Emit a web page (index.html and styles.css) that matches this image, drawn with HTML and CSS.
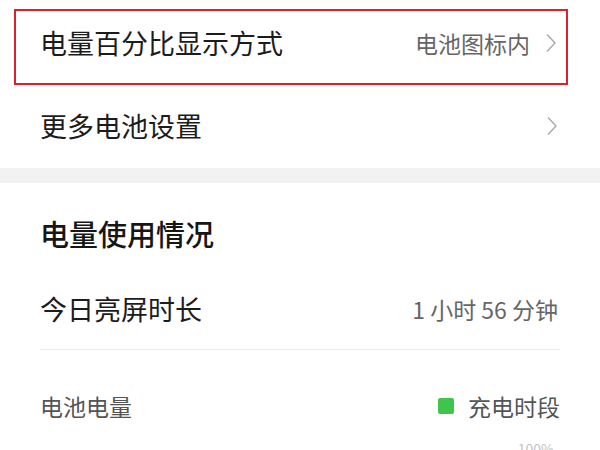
FILE: index.html
```html
<!DOCTYPE html>
<html lang="zh-CN">
<head>
    <meta charset="UTF-8">
    <meta name="viewport" content="width=device-width, initial-scale=1.0">
    <title>电池</title>
    <link rel="stylesheet" href="styles.css">
</head>
<body>
    <div class="settings">
        <div class="row row-marked">
            <span class="row-title">电量百分比显示方式</span>
            <span class="row-value">电池图标内</span>
            <svg class="chevron" viewBox="0 0 10 20" width="10" height="20">
                <polyline points="1,1.5 9,10 1,18.5" fill="none" stroke="#ababab" stroke-width="1.5"/>
            </svg>
        </div>
        <div class="row row-plain">
            <span class="row-title">更多电池设置</span>
            <svg class="chevron" viewBox="0 0 10 20" width="10" height="20">
                <polyline points="1,1.5 9,10 1,18.5" fill="none" stroke="#ababab" stroke-width="1.5"/>
            </svg>
        </div>
    </div>

    <div class="band"></div>

    <div class="usage">
        <h2 class="usage-title">电量使用情况</h2>
        <div class="usage-row">
            <span class="row-title">今日亮屏时长</span>
            <span class="usage-value">1 小时 56 分钟</span>
        </div>
        <div class="battery-row">
            <span class="battery-label">电池电量</span>
            <span class="legend">
                <i class="legend-dot"></i>
                充电时段
            </span>
        </div>
        <div class="chart-axis">100%</div>
    </div>
</body>
</html>
```

FILE: styles.css
```css
body {
    margin: 0;
    background: #fff;
    font-family: "Noto Sans CJK SC", "Noto Sans", sans-serif;
    color: #1c1c1c;
    overflow: hidden;
}
.row {
    display: flex;
    align-items: center;
    box-sizing: border-box;
}
.row-title {
    font-size: 27px;
    line-height: 32px;
    color: #1c1c1c;
    flex: 1;
}
.row-value {
    font-size: 23px;
    color: #666;
    margin-right: 16px;
}
.chevron {
    display: block;
}
/* annotated row (red frame) */
.row-marked {
    margin: 9px 0 0 14px;
    width: 554px;
    height: 76px;
    border: 2px solid #d9222d;
    padding: 0 10px 8px 24px;
}
.row-plain {
    height: 83px;
    padding: 0 43px 2px 40px;
}
.band {
    height: 15px;
    background: #f2f2f2;
}
.usage {
    padding: 0 40px;
}
.usage-title {
    margin: 0;
    height: 100px;
    display: flex;
    align-items: center;
    font-size: 29px;
    font-weight: 500;
    color: #161616;
}
.usage-row {
    display: flex;
    align-items: center;
    height: 52px;
    padding-bottom: 14px;
    border-bottom: 1px solid #ececec;
}
.usage-value {
    font-size: 23px;
    color: #666;
    margin-right: 2px;
}
.battery-row {
    display: flex;
    align-items: center;
    justify-content: space-between;
    padding-top: 44px;
    line-height: 24px;
    font-size: 23px;
    color: #555;
}
.legend {
    display: flex;
    align-items: center;
}
.legend-dot {
    width: 16px;
    height: 16px;
    border-radius: 2px;
    background: #3fc44c;
    margin-right: 14px;
}
.chart-axis {
    margin-top: 23px;
    text-align: right;
    font-size: 14px;
    line-height: 16px;
    color: #c4c4c4;
    padding-right: 6px;
}
```
